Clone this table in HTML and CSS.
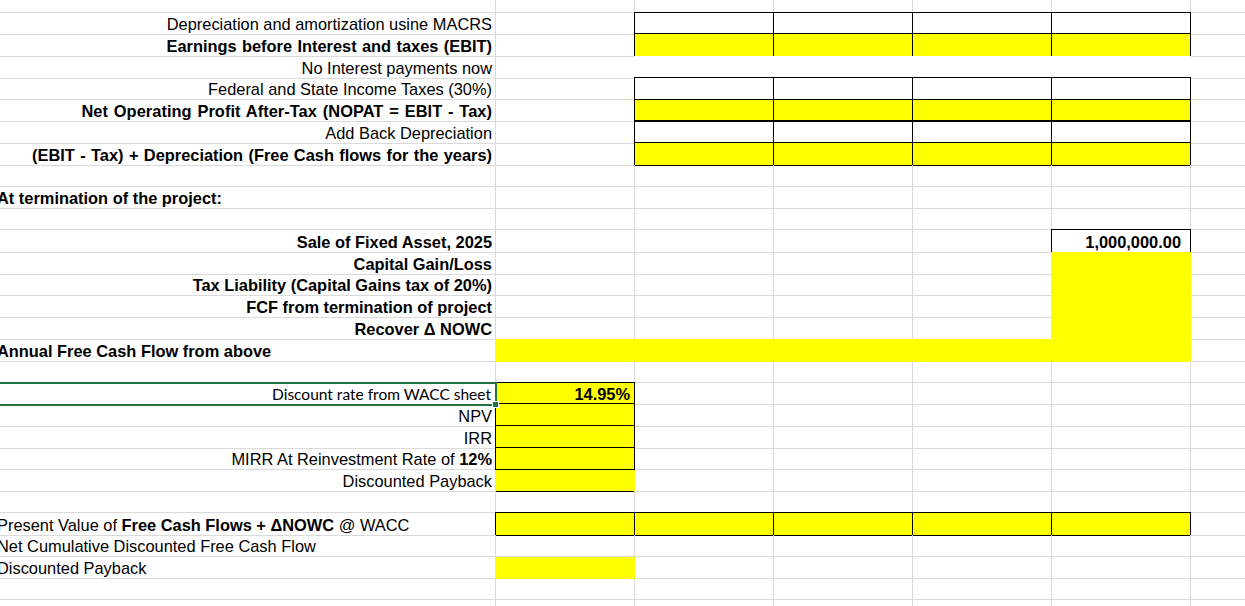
FILE: index.html
```html
<!DOCTYPE html>
<html lang="en">
<head>
<meta charset="utf-8">
<title>Project cash flows</title>
<link rel="stylesheet" href="styles.css">
</head>
<body>
<div class="sheet">
  <div class="row top"><div class="c a"></div><div class="c"></div><div class="c"></div><div class="c"></div><div class="c"></div><div class="c"></div><div class="c g"></div></div>

  <div class="row"><div class="c a r">Depreciation and amortization usine MACRS</div><div class="c"></div><div class="c bx"></div><div class="c bx"></div><div class="c bx"></div><div class="c bx"></div><div class="c g"></div></div>
  <div class="row"><div class="c a r b ws1">Earnings before Interest and taxes (EBIT)</div><div class="c"></div><div class="c y bx"></div><div class="c y bx"></div><div class="c y bx"></div><div class="c y bx"></div><div class="c g"></div></div>
  <div class="row"><div class="c a r">No Interest payments now</div><div class="c nr"></div><div class="c w"></div><div class="c w"></div><div class="c w"></div><div class="c w"></div><div class="c g"></div></div>
  <div class="row"><div class="c a r">Federal and State Income Taxes (30%)</div><div class="c"></div><div class="c bx"></div><div class="c bx"></div><div class="c bx"></div><div class="c bx"></div><div class="c g"></div></div>
  <div class="row"><div class="c a r b ws2">Net Operating Profit After-Tax (NOPAT = EBIT - Tax)</div><div class="c"></div><div class="c y bx"></div><div class="c y bx"></div><div class="c y bx"></div><div class="c y bx"></div><div class="c g"></div></div>
  <div class="row"><div class="c a r">Add Back Depreciation</div><div class="c"></div><div class="c bx"></div><div class="c bx"></div><div class="c bx"></div><div class="c bx"></div><div class="c g"></div></div>
  <div class="row"><div class="c a r b ws1">(EBIT - Tax) + Depreciation (Free Cash flows for the years)</div><div class="c"></div><div class="c y bx"></div><div class="c y bx"></div><div class="c y bx"></div><div class="c y bx"></div><div class="c g"></div></div>

  <div class="row"><div class="c a"></div><div class="c"></div><div class="c"></div><div class="c"></div><div class="c"></div><div class="c"></div><div class="c g"></div></div>
  <div class="row"><div class="c a b l">At termination of the project:</div><div class="c"></div><div class="c"></div><div class="c"></div><div class="c"></div><div class="c"></div><div class="c g"></div></div>
  <div class="row"><div class="c a"></div><div class="c"></div><div class="c"></div><div class="c"></div><div class="c"></div><div class="c"></div><div class="c g"></div></div>

  <div class="row"><div class="c a r b">Sale of Fixed Asset, 2025</div><div class="c"></div><div class="c"></div><div class="c"></div><div class="c"></div><div class="c bx r b big">1,000,000.00</div><div class="c g"></div></div>
  <div class="row"><div class="c a r b">Capital Gain/Loss</div><div class="c"></div><div class="c"></div><div class="c"></div><div class="c ny"></div><div class="c y"></div><div class="c g"></div></div>
  <div class="row"><div class="c a r b">Tax Liability (Capital Gains tax of 20%)</div><div class="c"></div><div class="c"></div><div class="c"></div><div class="c ny"></div><div class="c y"></div><div class="c g"></div></div>
  <div class="row"><div class="c a r b">FCF from termination of project</div><div class="c"></div><div class="c"></div><div class="c"></div><div class="c ny"></div><div class="c y"></div><div class="c g"></div></div>
  <div class="row"><div class="c a r b">Recover Δ NOWC</div><div class="c"></div><div class="c"></div><div class="c"></div><div class="c ny"></div><div class="c y"></div><div class="c g"></div></div>
  <div class="row"><div class="c a b l ny">Annual Free Cash Flow from above</div><div class="c y"></div><div class="c y"></div><div class="c y"></div><div class="c y"></div><div class="c y"></div><div class="c g"></div></div>

  <div class="row"><div class="c a"></div><div class="c"></div><div class="c"></div><div class="c"></div><div class="c"></div><div class="c"></div><div class="c g"></div></div>
  <div class="row"><div class="c a r cal sel">Discount rate from WACC sheet<span class="handle"></span></div><div class="c y bx r b num">14.95%</div><div class="c"></div><div class="c"></div><div class="c"></div><div class="c"></div><div class="c g"></div></div>
  <div class="row"><div class="c a r">NPV</div><div class="c y bx"></div><div class="c"></div><div class="c"></div><div class="c"></div><div class="c"></div><div class="c g"></div></div>
  <div class="row"><div class="c a r">IRR</div><div class="c y bx"></div><div class="c"></div><div class="c"></div><div class="c"></div><div class="c"></div><div class="c g"></div></div>
  <div class="row"><div class="c a r">MIRR At Reinvestment Rate of <b>12%</b></div><div class="c y bx"></div><div class="c"></div><div class="c"></div><div class="c"></div><div class="c"></div><div class="c g"></div></div>
  <div class="row"><div class="c a r ny">Discounted Payback</div><div class="c y bb"></div><div class="c"></div><div class="c"></div><div class="c"></div><div class="c"></div><div class="c g"></div></div>

  <div class="row"><div class="c a"></div><div class="c"></div><div class="c"></div><div class="c"></div><div class="c"></div><div class="c"></div><div class="c g"></div></div>
  <div class="row"><div class="c a l">Present Value of <b>Free Cash Flows + ΔNOWC</b> @ WACC</div><div class="c y bx"></div><div class="c y bx"></div><div class="c y bx"></div><div class="c y bx"></div><div class="c y bx"></div><div class="c g"></div></div>
  <div class="row"><div class="c a l">Net Cumulative Discounted Free Cash Flow</div><div class="c"></div><div class="c"></div><div class="c"></div><div class="c"></div><div class="c"></div><div class="c g"></div></div>
  <div class="row"><div class="c a l ny">Discounted Payback</div><div class="c y"></div><div class="c"></div><div class="c"></div><div class="c"></div><div class="c"></div><div class="c g"></div></div>
  <div class="row"><div class="c a"></div><div class="c"></div><div class="c"></div><div class="c"></div><div class="c"></div><div class="c"></div><div class="c g"></div></div>
  <div class="row"><div class="c a"></div><div class="c"></div><div class="c"></div><div class="c"></div><div class="c"></div><div class="c"></div><div class="c g"></div></div>
</div>
</body>
</html>
```

FILE: styles.css
```css
html, body {
  margin: 0;
  padding: 0;
  background: #fff;
  overflow: hidden;
  height: 606px;
}

.sheet {
  margin-left: -9px;
  font-family: "Liberation Sans", Arial, sans-serif;
  font-size: 16.4px;
  color: #000;
}

.row {
  display: grid;
  grid-template-columns: 505px repeat(5, 139px) 80px;
  height: 21.78px;
}

.row.top {
  height: 12.6px;
}

.c {
  position: relative;
  box-sizing: border-box;
  border-right: 1px solid #dadada;
  border-bottom: 1px solid #dadada;
  line-height: 20px;
  padding: 1.5px 3px 0 3px;
  white-space: nowrap;
  overflow: visible;
}

.c.r { text-align: right; }
.c.l { text-align: left; padding-left: 6px; }
.c.b, .c b { font-weight: bold; }

.c.ws1 { word-spacing: 0.8px; }
.c.ws2 { word-spacing: 1.2px; letter-spacing: 0.05px; }

.c.num { padding-right: 4px; }
.c.big { padding-right: 9px; }

.c.y {
  background: #ffff00;
  border-right-color: #ffff00;
  border-bottom-color: #ffff00;
}

.c.w {
  background: #fff;
  border-right-color: #fff;
  border-bottom-color: #fff;
}

.c.nr { border-right-color: #fff; }
.c.ny { border-right-color: #ffff00; }

.c.bx::after {
  content: "";
  position: absolute;
  top: -1px;
  left: -1px;
  right: -1px;
  bottom: -1px;
  border: 1px solid #000;
  pointer-events: none;
}

.c.bb {
  border-bottom-color: #000;
}

.c.cal {
  font-family: Lato, "Liberation Sans", sans-serif;
  font-size: 15.5px;
  padding-right: 4px;
}

.c.sel {
  z-index: 2;
}

.c.sel::after {
  content: "";
  position: absolute;
  top: -1px;
  left: -4px;
  right: -2px;
  bottom: -2px;
  border: 2px solid #217346;
  pointer-events: none;
}

.handle {
  position: absolute;
  right: -4px;
  bottom: -4px;
  width: 5px;
  height: 5px;
  background: #217346;
  border: 1px solid #fff;
  z-index: 3;
}
```
